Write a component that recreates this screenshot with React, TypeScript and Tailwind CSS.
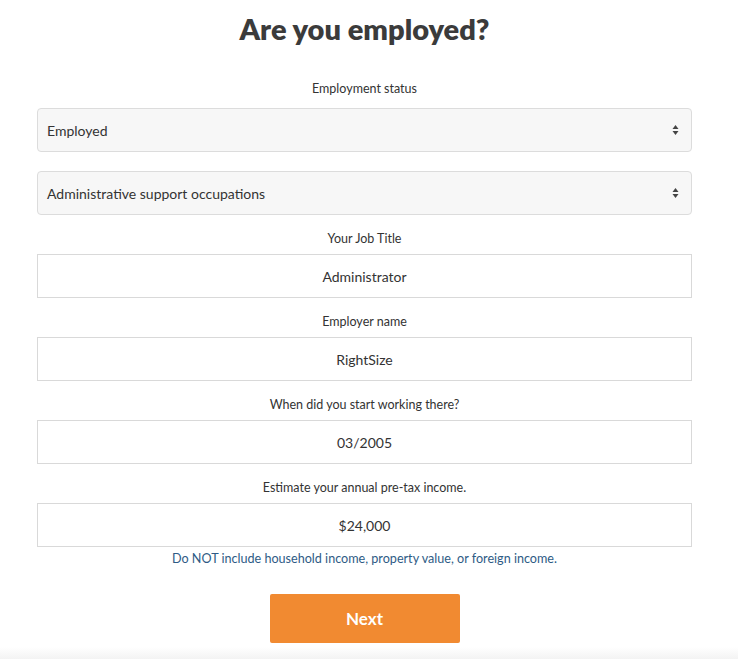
const font = "font-['Lato','Open_Sans',sans-serif]"

function Arrows() {
  return (
    <svg width="7" height="12" viewBox="0 0 7 12" className="shrink-0">
      <path d="M3.5 1 L6.5 5 H0.5 Z" fill="#444" />
      <path d="M3.5 11 L6.5 7 H0.5 Z" fill="#444" />
    </svg>
  )
}

function SelectBox({ value }: { value: string }) {
  return (
    <div className="h-[44px] flex items-center justify-between pl-[9px] pr-[12px] bg-[#f7f7f7] border border-[#dcdcdc] rounded-[4px] text-[14px] text-[#333]">
      <span>{value}</span>
      <Arrows />
    </div>
  )
}

function Field({ label, value }: { label: string; value: string }) {
  return (
    <>
      <p className="mt-[16px] mb-[7px] text-[12.5px] leading-[16px] text-center text-[#333]">{label}</p>
      <div className="h-[44px] flex items-center justify-center bg-white border border-[#d9d9d9] text-[14px] text-[#333]">
        {value}
      </div>
    </>
  )
}

export default function App() {
  return (
    <div className={`${font} relative h-[659px] bg-white overflow-hidden`}>
      <div className="ml-[37px] w-[655px] flex flex-col">
        <h1 className="mt-[12px] text-center text-[29px] leading-[34px] font-extrabold text-[#3b3b3b]">
          Are you employed?
        </h1>
        <p className="mt-[35px] mb-[11px] text-[12.5px] leading-[16px] text-center text-[#333]">Employment status</p>
        <SelectBox value="Employed" />
        <div className="mt-[19px]">
          <SelectBox value="Administrative support occupations" />
        </div>
        <Field label="Your Job Title" value="Administrator" />
        <Field label="Employer name" value="RightSize" />
        <Field label="When did you start working there?" value="03/2005" />
        <Field label="Estimate your annual pre-tax income." value="$24,000" />
        <p className="mt-[4px] text-[12.6px] leading-[16px] text-center text-[#2e5b85]">
          Do NOT include household income, property value, or foreign income.
        </p>
        <button className="mt-[27px] mx-auto w-[190px] h-[49px] rounded-[2px] bg-[#f18a31] text-white text-[17px] font-bold">
          Next
        </button>
      </div>
      <div className="absolute left-0 right-0 bottom-0 h-[12px] bg-gradient-to-b from-white to-[#f3f3f3]" />
    </div>
  )
}
